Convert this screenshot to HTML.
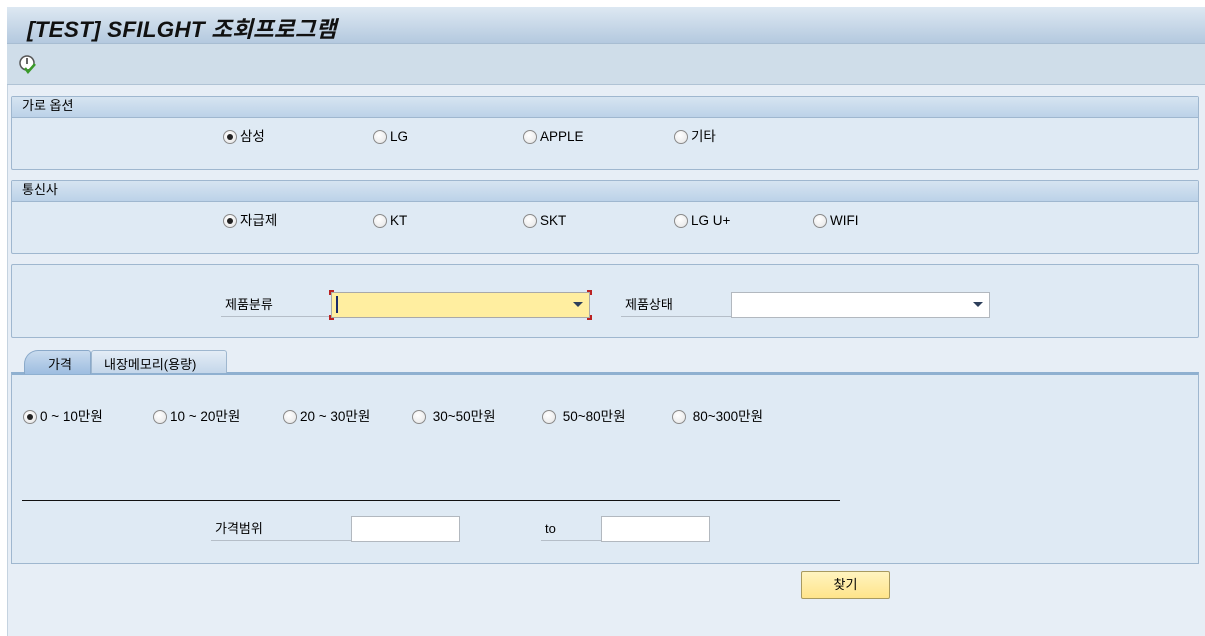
<!DOCTYPE html>
<html><head><meta charset="utf-8"><style>
*{box-sizing:border-box;margin:0;padding:0}
body{width:1205px;height:636px;overflow:hidden;background:#fff;font-family:"Liberation Sans","Noto Sans CJK KR",sans-serif;font-size:13px;color:#000;position:relative}
.a{position:absolute}
#main{left:7px;top:7px;width:1198px;height:629px;background:#e7eef6;border-left:1px solid #c5d3e0}
.grp{position:absolute;left:11px;width:1188px;background:#dfeaf4;border:1px solid #9fb7cf;border-radius:2px}
.gh{position:absolute;left:0;top:0;right:0;height:21px;background:linear-gradient(#d6e4f1,#bcd2e8);border-bottom:1px solid #9fb7cf;padding:0 0 0 10px;line-height:18px;font-size:13px}
.r{position:absolute;white-space:nowrap;line-height:16px;font-size:13.5px}
.r i{display:inline-block;width:14px;height:14px;border:1px solid #8a8a8a;border-radius:50%;background:radial-gradient(circle at 40% 35%,#fff,#e4e4e4);vertical-align:-3px;margin-right:3px;position:relative}
.r i.on::after{content:"";position:absolute;left:3px;top:3px;width:6px;height:6px;border-radius:50%;background:#222}
.lbl{position:absolute;border-bottom:1px solid #b5bec8;padding-left:4px;height:24px;line-height:24px}
.inp{position:absolute;background:#fff;border:1px solid #b2b8bf}
.dd{position:absolute;width:0;height:0;border-left:5px solid transparent;border-right:5px solid transparent;border-top:5px solid #2c3e5a}
</style></head><body>
<div id="main" class="a"></div>
<div class="a" style="left:7px;top:7px;width:1198px;height:37px;background:linear-gradient(#dde8f2,#b4c9df);border-bottom:1px solid #a8bdd2"></div>
<div class="a" style="left:27px;top:12px;font-size:22.5px;font-weight:bold;font-style:italic;color:#111;letter-spacing:0.2px">[TEST] SFILGHT 조회프로그램</div>
<div class="a" style="left:7px;top:44px;width:1198px;height:41px;background:#cfdde9;border-bottom:1px solid #b0c3d5"></div>
<svg class="a" style="left:17px;top:54px" width="22" height="22" viewBox="0 0 22 22"><circle cx="10" cy="9" r="7" fill="#fff" stroke="#555" stroke-width="1.5"/><path d="M10 4v6" stroke="#333" stroke-width="1.5"/><path d="M8 14l3 4 7-8" fill="none" stroke="#3a9a2a" stroke-width="2.5"/></svg>

<div class="grp" style="top:96px;height:74px"><div class="gh">가로 옵션</div></div>
<div class="r" style="left:223px;top:129px"><i class="on"></i>삼성</div>
<div class="r" style="left:373px;top:129px"><i></i>LG</div>
<div class="r" style="left:523px;top:129px"><i></i>APPLE</div>
<div class="r" style="left:674px;top:129px"><i></i>기타</div>

<div class="grp" style="top:180px;height:74px"><div class="gh">통신사</div></div>
<div class="r" style="left:223px;top:213px"><i class="on"></i>자급제</div>
<div class="r" style="left:373px;top:213px"><i></i>KT</div>
<div class="r" style="left:523px;top:213px"><i></i>SKT</div>
<div class="r" style="left:674px;top:213px"><i></i>LG U+</div>
<div class="r" style="left:813px;top:213px"><i></i>WIFI</div>

<div class="grp" style="top:264px;height:74px"></div>
<div class="lbl" style="left:221px;top:293px;width:110px">제품분류</div>
<div class="inp" style="left:331px;top:292px;width:259px;height:26px;background:#ffeea0;border-color:#a9a9a9"></div>
<div class="a" style="left:329px;top:290px;width:5px;height:5px;border-top:2px solid #b22;border-left:2px solid #b22"></div>
<div class="a" style="left:587px;top:290px;width:5px;height:5px;border-top:2px solid #b22;border-right:2px solid #b22"></div>
<div class="a" style="left:329px;top:315px;width:5px;height:5px;border-bottom:2px solid #b22;border-left:2px solid #b22"></div>
<div class="a" style="left:587px;top:315px;width:5px;height:5px;border-bottom:2px solid #b22;border-right:2px solid #b22"></div>
<div class="a" style="left:336px;top:296px;width:2px;height:17px;background:#1a2a6a"></div>
<div class="dd" style="left:573px;top:302px"></div>
<div class="lbl" style="left:621px;top:293px;width:110px">제품상태</div>
<div class="inp" style="left:731px;top:292px;width:259px;height:26px"></div>
<div class="dd" style="left:973px;top:302px"></div>

<div class="a" style="left:11px;top:372px;width:1188px;height:192px;background:#dfeaf4;border:1px solid #9fb7cf;border-top:3px solid #8fb0d0"></div>
<div class="a" style="left:91px;top:350px;width:136px;height:23px;background:linear-gradient(#e4edf6,#c4d7ea);border:1px solid #9fb7cf;border-bottom:none;border-radius:3px 3px 0 0;padding:3px 0 0 12px">내장메모리(용량)</div>
<div class="a" style="left:24px;top:350px;width:67px;height:24px;background:linear-gradient(#c9dbee,#9dbde0);border:1px solid #8aa9c9;border-bottom:none;border-radius:14px 3px 0 0;padding:3px 0 0 23px">가격</div>
<div class="r" style="left:23px;top:409px"><i class="on"></i>0 ~ 10만원</div>
<div class="r" style="left:153px;top:409px"><i></i>10 ~ 20만원</div>
<div class="r" style="left:283px;top:409px"><i></i>20 ~ 30만원</div>
<div class="r" style="left:412px;top:409px"><i></i>&nbsp;30~50만원</div>
<div class="r" style="left:542px;top:409px"><i></i>&nbsp;50~80만원</div>
<div class="r" style="left:672px;top:409px"><i></i>&nbsp;80~300만원</div>
<div class="a" style="left:22px;top:500px;width:818px;height:1px;background:#111"></div>
<div class="lbl" style="left:211px;top:517px;width:140px">가격범위</div>
<div class="inp" style="left:351px;top:516px;width:109px;height:26px"></div>
<div class="lbl" style="left:541px;top:517px;width:60px">to</div>
<div class="inp" style="left:601px;top:516px;width:109px;height:26px"></div>

<div class="a" style="left:801px;top:571px;width:89px;height:28px;background:linear-gradient(#fff4c0,#ffe48a);border:1px solid #a89a60;border-radius:2px;text-align:center;line-height:26px">찾기</div>
</body></html>
